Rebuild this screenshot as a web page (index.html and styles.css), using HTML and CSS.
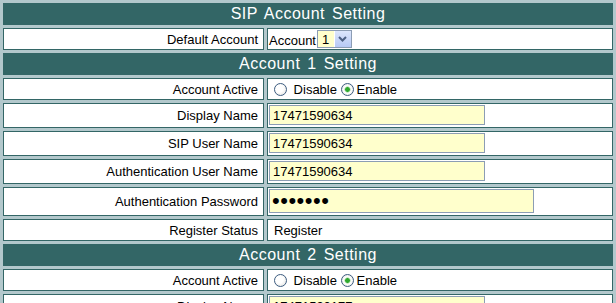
FILE: index.html
```html
<!DOCTYPE html>
<html lang="en">
<head>
  <meta charset="UTF-8" />
  <title>SIP Account Setting</title>
  <link rel="stylesheet" href="styles.css">
</head>
<body>
  <form class="sip-form">
    <table class="setting">
      <tr><th colspan="2">SIP Account Setting</th></tr>
      <tr>
        <td class="label">Default Account</td>
        <td class="value"><span class="acct">Account<span class="pick"><select class="pick-select"><option>1</option><option>2</option></select><span class="pick-btn"><svg width="9" height="6" viewBox="0 0 9 6"><path d="M1 1 L4.5 4.5 L8 1" fill="none" stroke="#4d6185" stroke-width="2"/></svg></span></span></span></td>
      </tr>

      <!-- account 1 -->
      <tr><th colspan="2">Account 1 Setting</th></tr>
      <tr>
        <td class="label">Account Active</td>
        <td class="value">
          <label class="opt"><input type="radio" name="act1" class="radio"> Disable</label>
          <label class="opt"><input type="radio" name="act1" class="radio" checked>Enable</label>
        </td>
      </tr>
      <tr>
        <td class="label">Display Name</td>
        <td class="value has-field"><input class="field" type="text" value="17471590634"></td>
      </tr>
      <tr>
        <td class="label">SIP User Name</td>
        <td class="value has-field"><input class="field" type="text" value="17471590634"></td>
      </tr>
      <tr>
        <td class="label">Authentication User Name</td>
        <td class="value has-field"><input class="field" type="text" value="17471590634"></td>
      </tr>
      <tr>
        <td class="label">Authentication Password</td>
        <td class="value has-field"><input class="field field-pass" type="password" value="1234567"></td>
      </tr>
      <tr>
        <td class="label">Register Status</td>
        <td class="value"><span class="status">Register</span></td>
      </tr>

      <!-- account 2 -->
      <tr><th colspan="2">Account 2 Setting</th></tr>
      <tr>
        <td class="label">Account Active</td>
        <td class="value">
          <label class="opt"><input type="radio" name="act2" class="radio"> Disable</label>
          <label class="opt"><input type="radio" name="act2" class="radio" checked>Enable</label>
        </td>
      </tr>
      <tr>
        <td class="label">Display Name</td>
        <td class="value has-field"><input class="field" type="text" value="17471590177"></td>
      </tr>
    </table>
  </form>
</body>
</html>
```

FILE: styles.css
```css
:root {
  --teal: #336666;
  --gap: #b3c8cc;
  --field-bg: #ffffcc;
  --field-line: #8c9db4;
}
html, body {
  margin: 0; padding: 0;
  background: var(--gap);
  font-family: 'Liberation Sans', Arial, sans-serif;
  font-size: 13px;
  color: #000;
}
.sip-form { margin: 0; }
.setting {
  width: 100%;
  border-spacing: 3px;
  background: var(--gap);
}
.setting th {
  background: var(--teal);
  color: #fff;
  font-weight: normal;
  font-size: 16px;
  letter-spacing: 0.5px;
  word-spacing: 2px;
  height: 20px;
  padding: 0;
  border: 1px solid var(--teal);
}
.setting td {
  background: #fff;
  border: 1px solid var(--teal);
  height: 20px;
  padding: 0 1px;
}
.setting td.has-field { padding: 1px 1px 2px; }
.label {
  width: 253px;
  text-align: right;
  padding-right: 5px !important;
}
.value { white-space: nowrap; }

.acct {
  display: inline-flex;
  align-items: center;
  vertical-align: middle;
  padding-top: 2px;
}
.pick {
  display: inline-flex;
  align-items: stretch;
  border: 1px solid var(--field-line);
  margin-left: 1px;
  margin-top: -2px;
}
.pick-select {
  appearance: none;
  -webkit-appearance: none;
  border: none;
  background: var(--field-bg);
  font-family: inherit;
  font-size: 13px;
  padding: 0 4px;
  height: 16px;
  outline: none;
}
.pick-btn {
  width: 16px;
  display: flex;
  align-items: center;
  justify-content: center;
  background: linear-gradient(#dce6fc, #b7c9f5);
  border-left: 1px solid #fff;
}

.opt { margin-left: 0; }
.opt:first-child { margin-left: 5px; }
.radio {
  appearance: none;
  -webkit-appearance: none;
  width: 13px; height: 13px;
  margin: 0 3px 0 0;
  border: 1px solid #3c5c80;
  border-radius: 50%;
  background: radial-gradient(circle at 40% 40%, #fff 40%, #dcdcd8);
  vertical-align: -2px;
}
.radio:checked {
  background: radial-gradient(circle, #2fa82f 0 2px, #9ad89a 2.5px, #fff 3.5px, #dcdcd8);
}

.field {
  box-sizing: border-box;
  width: 216px;
  height: 20px;
  margin: 0;
  border: 1px solid var(--field-line);
  background: var(--field-bg);
  font-family: inherit;
  font-size: 13px;
  padding: 0 3px;
  vertical-align: middle;
}
.field-pass {
  width: 265px;
  height: 24px;
  font-size: 22px;
  padding: 0 2px;
  letter-spacing: 0.5px;
}
.status { padding-left: 5px; }
```
